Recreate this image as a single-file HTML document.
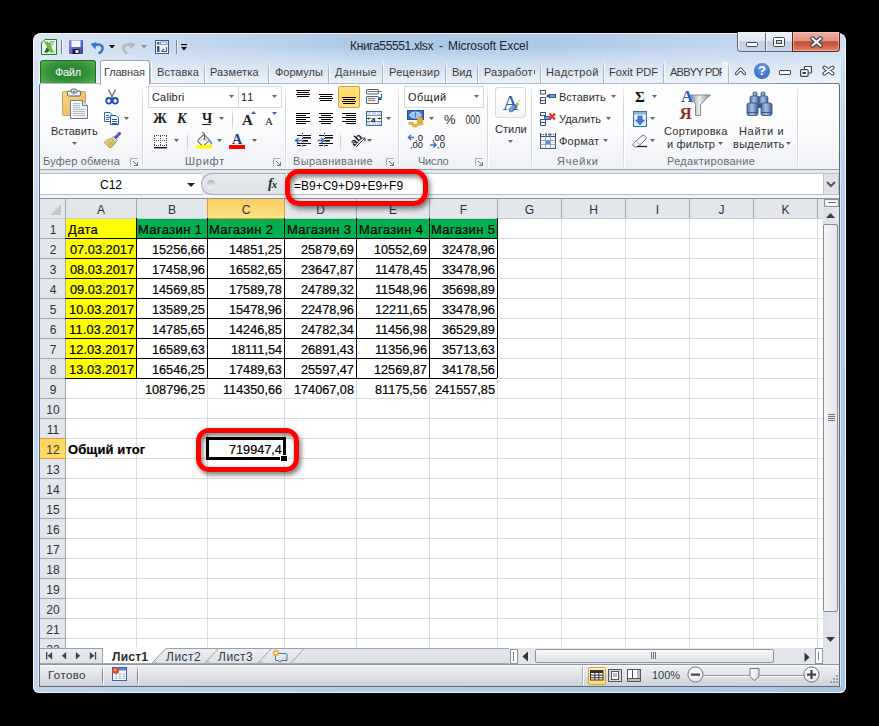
<!DOCTYPE html>
<html><head><meta charset="utf-8">
<style>
*{margin:0;padding:0;box-sizing:border-box}
html,body{width:879px;height:726px;overflow:hidden;background:#000}
body{position:relative;font-family:"Liberation Sans", sans-serif;}
.a{position:absolute}
.t{position:absolute;white-space:nowrap;line-height:1}
</style></head><body>

<div class="a" style="left:33px;top:33px;width:813px;height:660px;border-radius:8px 8px 6px 6px;background:linear-gradient(90deg,#dae6f3 0px,#c6d9ee 140px,#afc9e5 320px,#aec8e5 520px,#c2d6ed 700px,#cddef1 813px);box-shadow:inset 0 0 0 1px rgba(255,255,255,0.75)"></div>
<div class="a" style="left:34px;top:46px;width:811px;height:38px;background:linear-gradient(180deg,rgba(230,238,248,0) 0px,rgba(226,236,247,0.6) 16px,rgba(238,244,251,0.95) 37px)"></div>
<div class="a" style="left:34px;top:58px;width:5px;height:629px;background:linear-gradient(180deg,#d3e2f2,#c3d7ec 25%,#bcd3ea 100%)"></div>
<div class="a" style="left:38px;top:58px;width:1px;height:629px;background:#e2eefa"></div>
<div class="a" style="left:840px;top:58px;width:5px;height:629px;background:linear-gradient(180deg,#cddff1,#b4cce6 25%,#a9c4e1 100%)"></div>
<div class="a" style="left:840px;top:58px;width:1px;height:629px;background:#dceaf7"></div>
<div class="a" style="left:34px;top:686px;width:811px;height:6px;border-radius:0 0 5px 5px;background:linear-gradient(90deg,#bcd3ea,#b3cde8 50%,#a9c4e1)"></div>
<div class="t" style="left:350px;top:40px;font-size:12px;letter-spacing:-0.357px;color:#1b2531">Книга55551.xlsx</div>
<div class="t" style="left:439px;top:40px;font-size:12px;color:#1b2531">-</div>
<div class="t" style="left:448px;top:40px;font-size:12px;letter-spacing:-0.071px;color:#1b2531">Microsoft Excel</div>
<div class="a" style="left:737px;top:32px;width:56px;height:20px;border:1px solid #5f6a78;border-top:0;border-radius:0 0 0 4px;background:linear-gradient(180deg,#eef3f9 0%,#dfe8f2 45%,#c2d2e3 52%,#c9d8e8 100%);box-shadow:inset 1px 0 0 rgba(255,255,255,.7)"></div>
<div class="a" style="left:765px;top:33px;width:1px;height:18px;background:#5f6a78;box-shadow:1px 0 0 rgba(255,255,255,.7)"></div>
<div class="a" style="left:792px;top:32px;width:48px;height:20px;border:1px solid #5a2a22;border-top:0;border-radius:0 0 4px 0;background:linear-gradient(180deg,#eeb0a3 0%,#e39584 45%,#c9482c 52%,#d26a50 80%,#dc8a74 100%);box-shadow:inset 0 0 0 1px rgba(255,210,200,.5)"></div>
<div class="a" style="left:746px;top:42px;width:12px;height:5px;background:#fff;border:1px solid #3c4552;border-radius:1.5px"></div>
<div class="a" style="left:773px;top:37px;width:12px;height:10px;border:1px solid #3c4552;border-radius:1.5px;background:#fff"></div>
<div class="a" style="left:776px;top:40px;width:6px;height:4px;border:1px solid #3c4552;background:#c5d3e2"></div>
<svg class="a" style="left:810px;top:36px" width="13" height="12"><path d="M2.5,2.5 L10.5,9.5 M10.5,2.5 L2.5,9.5" stroke="#3a4454" stroke-width="4.4" stroke-linecap="round"/><path d="M2.5,2.5 L10.5,9.5 M10.5,2.5 L2.5,9.5" stroke="#fff" stroke-width="2.2" stroke-linecap="round"/></svg>
<svg class="a" style="left:41px;top:39px" width="17" height="17">
<defs><linearGradient id="xg" x1="0" y1="0" x2="1" y2="1"><stop offset="0" stop-color="#ffffff"/><stop offset="1" stop-color="#ddf0d6"/></linearGradient></defs>
<path d="M4,0.5 H15.5 V15.5 H0.5 V4 Z" fill="url(#xg)" stroke="#1f7a33"/>
<polygon points="9.3,2.5 13.3,2.5 7,13.5 3,13.5" fill="#1e6c30"/>
<polygon points="9.3,2.5 13.3,2.5 10.5,7.3 8.6,6.2" fill="#a8d88f"/>
<polygon points="2.8,2.5 6.8,2.5 13.3,13.5 9.3,13.5" fill="#69bd3f"/>
</svg>
<div class="a" style="left:61px;top:40px;width:1px;height:14px;background:#7c8896;box-shadow:1px 0 0 rgba(255,255,255,.6)"></div>
<svg class="a" style="left:69px;top:40px" width="15" height="15">
<defs><linearGradient id="svg1" x1="0" y1="0" x2="1" y2="1"><stop offset="0" stop-color="#8a8ff0"/><stop offset="1" stop-color="#3b3fa8"/></linearGradient></defs>
<rect x="0" y="0" width="14" height="14" rx="1" fill="url(#svg1)"/><rect x="2.5" y="0.5" width="9" height="6.5" fill="#f7f8fc"/>
<rect x="3.5" y="9" width="7" height="5" fill="#1c1c2c"/><rect x="6.5" y="10" width="3" height="3" fill="#dfe3ea"/></svg>
<svg class="a" style="left:90px;top:41px" width="15" height="13">
<path d="M3,5.5 C8,2 13,3.5 12.5,8 C12,10.5 10,12 8.5,12.5" fill="none" stroke="#3a78d0" stroke-width="2.6"/>
<polygon points="0.5,3 6.5,1 5.5,8.5" fill="#3a78d0"/></svg>
<svg class="a" style="left:109px;top:45px" width="7" height="4"><polygon points="0,0 6,0 3,3.5" fill="#000"/></svg>
<svg class="a" style="left:122px;top:41px" width="14" height="13">
<path d="M11,5.5 C6,2 1,3.5 1.5,8 C2,10.5 4,12 5.5,12.5" fill="none" stroke="#b5b9be" stroke-width="2.6"/>
<polygon points="13.5,3 7.5,1 8.5,8.5" fill="#b5b9be"/></svg>
<svg class="a" style="left:141px;top:45px" width="7" height="4"><polygon points="0,0 6,0 3,3.5" fill="#8a9099"/></svg>
<svg class="a" style="left:155px;top:40px" width="15" height="15">
<rect x="0.5" y="0.5" width="13" height="13" fill="#f4f7fb" stroke="#3e5b8a"/><rect x="2" y="2" width="2.5" height="2.5" fill="#3e5b8a"/>
<rect x="5.5" y="2" width="6.5" height="2.5" fill="none" stroke="#6f87ad" stroke-width="0.8"/><rect x="2" y="6" width="2.5" height="6" fill="#3e5b8a"/>
<path d="M6.5,11.5 L11.5,11.5 L11.5,7 M9,9 L6.5,11.5" fill="none" stroke="#3e5b8a" stroke-width="1.1"/></svg>
<div class="a" style="left:176px;top:40px;width:1px;height:14px;background:#7c8896;box-shadow:1px 0 0 rgba(255,255,255,.6)"></div>
<svg class="a" style="left:181px;top:44px" width="8" height="8"><rect x="0" y="0" width="6" height="1.2" fill="#000"/><polygon points="0,3 6,3 3,6.5" fill="#000"/></svg>
<div class="a" style="left:39px;top:83px;width:801px;height:87px;background:linear-gradient(180deg,#ffffff 0%,#fdfdfe 45%,#eef1f5 100%);border-left:1px solid #5f6b78;border-right:1px solid #5f6b78;border-bottom:1px solid #9aa3ad;border-top:1px solid #b3bac3;border-radius:3px 3px 0 0"></div>
<div class="a" style="left:700px;top:83px;width:139px;height:1px;background:linear-gradient(90deg,#b3bac3,#6d7783)"></div>
<div class="a" style="left:40px;top:60px;width:56px;height:23px;border-radius:3px 3px 0 0;border:1px solid #1f6a27;border-bottom:0;background:radial-gradient(ellipse 65% 75% at 50% 50%,#2a8130 0%,#2f8a35 45%,#56b34f 100%)"></div>
<div class="t" style="left:55px;top:67px;font-size:11px;letter-spacing:-0.333px;color:#fff">Файл</div>
<div class="a" style="left:100px;top:60px;width:50px;height:25px;background:linear-gradient(180deg,#fcfdfe,#fff);border:1px solid #9ba5b1;border-bottom:0;border-radius:3px 3px 0 0"></div>
<div class="t" style="left:104px;top:67px;font-size:11px;letter-spacing:-0.167px;color:#3c3c3c">Главная</div>
<div class="a" style="left:150px;top:62px;width:1px;height:21px;background:linear-gradient(180deg,rgba(170,182,196,0),#aab6c4 30%,#aab6c4);box-shadow:1px 0 0 rgba(255,255,255,.7)"></div>
<div class="t" style="left:157px;top:67px;font-size:11px;letter-spacing:0.167px;color:#3c3c3c">Вставка</div>
<div class="a" style="left:204px;top:62px;width:1px;height:21px;background:linear-gradient(180deg,rgba(170,182,196,0),#aab6c4 30%,#aab6c4);box-shadow:1px 0 0 rgba(255,255,255,.7)"></div>
<div class="t" style="left:210px;top:67px;font-size:11px;letter-spacing:0.143px;color:#3c3c3c">Разметка</div>
<div class="a" style="left:268px;top:62px;width:1px;height:21px;background:linear-gradient(180deg,rgba(170,182,196,0),#aab6c4 30%,#aab6c4);box-shadow:1px 0 0 rgba(255,255,255,.7)"></div>
<div class="t" style="left:275px;top:67px;font-size:11px;letter-spacing:0.000px;color:#3c3c3c">Формулы</div>
<div class="a" style="left:328px;top:62px;width:1px;height:21px;background:linear-gradient(180deg,rgba(170,182,196,0),#aab6c4 30%,#aab6c4);box-shadow:1px 0 0 rgba(255,255,255,.7)"></div>
<div class="t" style="left:335px;top:67px;font-size:11px;letter-spacing:0.400px;color:#3c3c3c">Данные</div>
<div class="a" style="left:382px;top:62px;width:1px;height:21px;background:linear-gradient(180deg,rgba(170,182,196,0),#aab6c4 30%,#aab6c4);box-shadow:1px 0 0 rgba(255,255,255,.7)"></div>
<div class="t" style="left:389px;top:67px;font-size:11px;letter-spacing:0.286px;color:#3c3c3c">Рецензир</div>
<div class="a" style="left:445px;top:62px;width:1px;height:21px;background:linear-gradient(180deg,rgba(170,182,196,0),#aab6c4 30%,#aab6c4);box-shadow:1px 0 0 rgba(255,255,255,.7)"></div>
<div class="t" style="left:452px;top:67px;font-size:11px;letter-spacing:0.000px;color:#3c3c3c">Вид</div>
<div class="a" style="left:477px;top:62px;width:1px;height:21px;background:linear-gradient(180deg,rgba(170,182,196,0),#aab6c4 30%,#aab6c4);box-shadow:1px 0 0 rgba(255,255,255,.7)"></div>
<div class="t" style="left:484px;top:67px;font-size:11px;letter-spacing:0.143px;color:#3c3c3c">Разработ</div>
<div class="a" style="left:540px;top:62px;width:1px;height:21px;background:linear-gradient(180deg,rgba(170,182,196,0),#aab6c4 30%,#aab6c4);box-shadow:1px 0 0 rgba(255,255,255,.7)"></div>
<div class="t" style="left:546px;top:67px;font-size:11px;letter-spacing:0.429px;color:#3c3c3c">Надстрой</div>
<div class="a" style="left:603px;top:62px;width:1px;height:21px;background:linear-gradient(180deg,rgba(170,182,196,0),#aab6c4 30%,#aab6c4);box-shadow:1px 0 0 rgba(255,255,255,.7)"></div>
<div class="t" style="left:609px;top:67px;font-size:11px;letter-spacing:0.000px;color:#3c3c3c">Foxit PDF</div>
<div class="a" style="left:663px;top:62px;width:1px;height:21px;background:linear-gradient(180deg,rgba(170,182,196,0),#aab6c4 30%,#aab6c4);box-shadow:1px 0 0 rgba(255,255,255,.7)"></div>
<div class="t" style="left:670px;top:67px;font-size:11px;letter-spacing:-0.750px;color:#3c3c3c">ABBYY PDF</div>
<div class="a" style="left:534px;top:70px;width:1px;height:4px;background:#3c3c3c;opacity:.8"></div>
<div class="a" style="left:722px;top:62px;width:6px;height:21px;background:linear-gradient(90deg,#eef3f9,#eef3f9)"></div>
<div class="a" style="left:728px;top:62px;width:1px;height:21px;background:linear-gradient(180deg,rgba(170,182,196,0),#aab6c4 30%,#aab6c4);box-shadow:1px 0 0 rgba(255,255,255,.7)"></div>
<svg class="a" style="left:735px;top:67px" width="11" height="9"><path d="M1.5,6.5 L5.5,2 L9.5,6.5" fill="none" stroke="#3c4552" stroke-width="3.2" stroke-linejoin="round" stroke-linecap="round"/><path d="M1.5,6.5 L5.5,2 L9.5,6.5" fill="none" stroke="#fff" stroke-width="1.2" stroke-linejoin="round" stroke-linecap="round"/></svg>
<div class="a" style="left:754px;top:63px;width:16px;height:16px;border-radius:50%;background:radial-gradient(circle at 50% 30%,#6d9fe3,#3f77cc 60%,#2f64ba)"></div>
<div class="t" style="left:758px;top:64px;font-size:13px;font-weight:bold;color:#fff">?</div>
<div class="a" style="left:779px;top:70px;width:12px;height:5px;border:1px solid #3c4552;border-radius:1px;background:#fff"></div>
<svg class="a" style="left:800px;top:66px" width="13" height="11"><rect x="4.5" y="0.5" width="7" height="6.5" rx="1" fill="#fff" stroke="#3c4552" stroke-width="1.2"/><rect x="0.6" y="3.6" width="7.5" height="6.8" rx="1" fill="#fff" stroke="#3c4552" stroke-width="1.2"/><rect x="2.5" y="6" width="3.5" height="2" fill="#3c4552"/></svg>
<svg class="a" style="left:822px;top:65px" width="13" height="11"><path d="M2.5,2.5 L10.5,8.5 M10.5,2.5 L2.5,8.5" stroke="#3c4552" stroke-width="4" stroke-linecap="round"/><path d="M2.5,2.5 L10.5,8.5 M10.5,2.5 L2.5,8.5" stroke="#fff" stroke-width="2" stroke-linecap="round"/></svg>
<div class="a" style="left:142px;top:85px;width:1px;height:83px;background:linear-gradient(180deg,rgba(210,215,222,.2),#d2d7de 20%,#d2d7de 85%,rgba(210,215,222,.4));box-shadow:1px 0 0 #fff"></div>
<div class="a" style="left:285px;top:85px;width:1px;height:83px;background:linear-gradient(180deg,rgba(210,215,222,.2),#d2d7de 20%,#d2d7de 85%,rgba(210,215,222,.4));box-shadow:1px 0 0 #fff"></div>
<div class="a" style="left:398px;top:85px;width:1px;height:83px;background:linear-gradient(180deg,rgba(210,215,222,.2),#d2d7de 20%,#d2d7de 85%,rgba(210,215,222,.4));box-shadow:1px 0 0 #fff"></div>
<div class="a" style="left:487px;top:85px;width:1px;height:83px;background:linear-gradient(180deg,rgba(210,215,222,.2),#d2d7de 20%,#d2d7de 85%,rgba(210,215,222,.4));box-shadow:1px 0 0 #fff"></div>
<div class="a" style="left:531px;top:85px;width:1px;height:83px;background:linear-gradient(180deg,rgba(210,215,222,.2),#d2d7de 20%,#d2d7de 85%,rgba(210,215,222,.4));box-shadow:1px 0 0 #fff"></div>
<div class="a" style="left:623px;top:85px;width:1px;height:83px;background:linear-gradient(180deg,rgba(210,215,222,.2),#d2d7de 20%,#d2d7de 85%,rgba(210,215,222,.4));box-shadow:1px 0 0 #fff"></div>
<div class="a" style="left:797px;top:85px;width:1px;height:83px;background:linear-gradient(180deg,rgba(210,215,222,.2),#d2d7de 20%,#d2d7de 85%,rgba(210,215,222,.4));box-shadow:1px 0 0 #fff"></div>
<div class="t" style="left:43px;top:156px;font-size:11px;letter-spacing:0.182px;color:#646b76">Буфер обмена</div>
<svg class="a" style="left:130px;top:158px" width="9" height="9"><path d="M0.5,7.5 V0.5 H7.5" fill="none" stroke="#a7adb5"/><path d="M3,3 L7,7 M7.5,4 V7.5 H4" fill="none" stroke="#707882"/></svg>
<div class="t" style="left:185px;top:156px;font-size:11px;letter-spacing:0.750px;color:#646b76">Шрифт</div>
<svg class="a" style="left:273px;top:158px" width="9" height="9"><path d="M0.5,7.5 V0.5 H7.5" fill="none" stroke="#a7adb5"/><path d="M3,3 L7,7 M7.5,4 V7.5 H4" fill="none" stroke="#707882"/></svg>
<div class="t" style="left:293px;top:156px;font-size:11px;letter-spacing:0.364px;color:#646b76">Выравнивание</div>
<svg class="a" style="left:386px;top:158px" width="9" height="9"><path d="M0.5,7.5 V0.5 H7.5" fill="none" stroke="#a7adb5"/><path d="M3,3 L7,7 M7.5,4 V7.5 H4" fill="none" stroke="#707882"/></svg>
<div class="t" style="left:418px;top:156px;font-size:11px;letter-spacing:-0.250px;color:#646b76">Число</div>
<svg class="a" style="left:475px;top:158px" width="9" height="9"><path d="M0.5,7.5 V0.5 H7.5" fill="none" stroke="#a7adb5"/><path d="M3,3 L7,7 M7.5,4 V7.5 H4" fill="none" stroke="#707882"/></svg>
<div class="t" style="left:557px;top:156px;font-size:11px;letter-spacing:0.800px;color:#646b76">Ячейки</div>
<div class="t" style="left:667px;top:156px;font-size:11px;letter-spacing:0.308px;color:#646b76">Редактирование</div>
<svg class="a" style="left:58px;top:86px" width="34" height="36"><defs><linearGradient id="cb" x1="0" y1="0" x2="1" y2="1"><stop offset="0" stop-color="#f8d386"/><stop offset="1" stop-color="#ecb652"/></linearGradient>
<linearGradient id="pp" x1="0" y1="0" x2="1" y2="1"><stop offset="0" stop-color="#ffffff"/><stop offset="1" stop-color="#e6ebf2"/></linearGradient></defs>
<rect x="4.5" y="5.5" width="23" height="24" rx="1.5" fill="url(#cb)" stroke="#c9a462"/>
<rect x="9.5" y="5" width="13" height="5" rx="1.2" fill="#e9edf2" stroke="#5d6670"/>
<rect x="13" y="3" width="6" height="4" rx="2" fill="#e9edf2" stroke="#5d6670"/><circle cx="16" cy="5.5" r="1" fill="#8a6a3a"/>
<path d="M12.5,14.5 H24.5 L29.5,19.5 V32.5 H12.5 Z" fill="url(#pp)" stroke="#6d7d93"/>
<path d="M24.5,14.5 V19.5 H29.5" fill="#dde4ee" stroke="#6d7d93"/>
<path d="M15,17.5 H22 M15,19.5 H22 M15,21.5 H22 M15,23.5 H27 M15,25.5 H27 M15,27.5 H27 M15,29.5 H27" stroke="#aab4c1" stroke-width="0.9"/></svg>
<div class="t" style="left:51px;top:126px;font-size:11px;letter-spacing:0.000px;color:#2e2e2e">Вставить</div>
<svg class="a" style="left:72px;top:142px" width="6" height="4"><polygon points="0,0 5,0 2.5,3" fill="#646464"/></svg>
<svg class="a" style="left:105px;top:89px" width="14" height="16"><path d="M3.5,0.5 L8,9.5 M10.5,0.5 L6,9.5" stroke="#737a85" stroke-width="1.5"/>
<ellipse cx="3.8" cy="11.8" rx="2.6" ry="2.8" fill="none" stroke="#1f4fb8" stroke-width="1.9"/><ellipse cx="10.2" cy="11.8" rx="2.6" ry="2.8" fill="none" stroke="#1f4fb8" stroke-width="1.9"/></svg>
<svg class="a" style="left:103px;top:111px" width="18" height="15"><path d="M1.5,1.5 H7 L9.5,4 V10.5 H1.5 Z" fill="#fbfcfe" stroke="#3a68b4"/>
<path d="M3,4.5 H6 M3,6.5 H7.5 M3,8.5 H6" stroke="#3a68b4"/>
<path d="M7.5,4.5 H13 L15.5,7 V13.5 H7.5 Z" fill="#ffffff" stroke="#2755a6"/>
<path d="M9,8.5 H14 M9,10.5 H14 M9,12.5 H14" stroke="#2755a6"/></svg>
<svg class="a" style="left:124px;top:117px" width="6" height="4"><polygon points="0,0 5,0 2.5,3" fill="#646464"/></svg>
<svg class="a" style="left:103px;top:132px" width="18" height="17"><defs><linearGradient id="br" x1="0" y1="0" x2="1" y2="1"><stop offset="0" stop-color="#fbe9a0"/><stop offset="1" stop-color="#c9a535"/></linearGradient></defs>
<path d="M16.5,1.5 L12.5,5.5" stroke="#4b3fb0" stroke-width="3" stroke-linecap="round"/><path d="M16,1.5 L13,4.5" stroke="#9d95e8" stroke-width="0.8"/>
<path d="M10.5,4.5 L14.5,8.5 L12.5,10.5 L8.5,6.5 Z" fill="#d3d7de" stroke="#6f7680" stroke-width="0.7"/>
<path d="M8.5,6.5 L12.5,10.5 C11,13 9,15 7,16 L1,10.5 C2.5,8.5 5,7 8.5,6.5 Z" fill="url(#br)" stroke="#9a8230" stroke-width="0.7"/>
<path d="M3,11 L8,8.5 M5,13 L10,10" stroke="#b8972e" stroke-width="0.6"/></svg>
<div class="a" style="left:148px;top:86px;width:91px;height:22px;background:#fff;border:1px solid #d3d8de"></div>
<div class="a" style="left:238px;top:86px;width:44px;height:22px;background:#fff;border:1px solid #d3d8de"></div>
<div class="t" style="left:152px;top:92px;font-size:11px;letter-spacing:0.167px;color:#1a1a1a">Calibri</div>
<svg class="a" style="left:229px;top:95px" width="6" height="4"><polygon points="0,0 5,0 2.5,3" fill="#646464"/></svg>
<svg class="a" style="left:272px;top:95px" width="6" height="4"><polygon points="0,0 5,0 2.5,3" fill="#646464"/></svg>
<div class="t" style="left:241px;top:92px;font-size:11px;letter-spacing:1.000px;color:#1a1a1a">11</div>
<div class="t" style="left:153px;top:112px;font-family:\'Liberation Serif\',serif;font-weight:bold;font-size:14px;color:#1e1e1e">Ж</div>
<div class="t" style="left:177px;top:112px;font-family:\'Liberation Serif\',serif;font-weight:bold;font-size:14px;font-style:italic;color:#1e1e1e">К</div>
<div class="t" style="left:202px;top:112px;font-family:\'Liberation Serif\',serif;font-weight:bold;font-size:14px;color:#1e1e1e">Ч</div>
<div class="a" style="left:202px;top:124px;width:9px;height:1px;background:#1e1e1e"></div>
<svg class="a" style="left:219px;top:117px" width="6" height="4"><polygon points="0,0 5,0 2.5,3" fill="#646464"/></svg>
<div class="a" style="left:232px;top:109px;width:1px;height:22px;background:linear-gradient(180deg,rgba(205,210,217,0),#cdd2d9 30%,#cdd2d9 70%,rgba(205,210,217,0))"></div>
<div class="t" style="left:242px;top:113px;font-family:\'Liberation Serif\',serif;font-weight:bold;font-size:15px;color:#222">A</div>
<svg class="a" style="left:251px;top:111px" width="6" height="4"><polygon points="0,3 5,3 2.5,0" fill="#2f62c0"/></svg>
<div class="t" style="left:265px;top:116px;font-family:\'Liberation Serif\',serif;font-size:11px;color:#222">A</div>
<svg class="a" style="left:272px;top:112px" width="6" height="4"><polygon points="0,0 5,0 2.5,3" fill="#2f62c0"/></svg>
<svg class="a" style="left:154px;top:135px" width="14" height="14"><rect x="0" y="0" width="1" height="1" fill="#4a4a4a"/><rect x="2" y="0" width="1" height="1" fill="#4a4a4a"/><rect x="4" y="0" width="1" height="1" fill="#4a4a4a"/><rect x="6" y="0" width="1" height="1" fill="#4a4a4a"/><rect x="8" y="0" width="1" height="1" fill="#4a4a4a"/><rect x="10" y="0" width="1" height="1" fill="#4a4a4a"/><rect x="12" y="0" width="1" height="1" fill="#4a4a4a"/><rect x="0" y="5" width="1" height="1" fill="#4a4a4a"/><rect x="2" y="5" width="1" height="1" fill="#4a4a4a"/><rect x="4" y="5" width="1" height="1" fill="#4a4a4a"/><rect x="6" y="5" width="1" height="1" fill="#4a4a4a"/><rect x="8" y="5" width="1" height="1" fill="#4a4a4a"/><rect x="10" y="5" width="1" height="1" fill="#4a4a4a"/><rect x="12" y="5" width="1" height="1" fill="#4a4a4a"/><rect x="0" y="10" width="1" height="1" fill="#4a4a4a"/><rect x="2" y="10" width="1" height="1" fill="#4a4a4a"/><rect x="4" y="10" width="1" height="1" fill="#4a4a4a"/><rect x="6" y="10" width="1" height="1" fill="#4a4a4a"/><rect x="8" y="10" width="1" height="1" fill="#4a4a4a"/><rect x="10" y="10" width="1" height="1" fill="#4a4a4a"/><rect x="12" y="10" width="1" height="1" fill="#4a4a4a"/><rect x="0" y="1" width="1" height="1" fill="#4a4a4a"/><rect x="0" y="3" width="1" height="1" fill="#4a4a4a"/><rect x="0" y="5" width="1" height="1" fill="#4a4a4a"/><rect x="0" y="7" width="1" height="1" fill="#4a4a4a"/><rect x="0" y="9" width="1" height="1" fill="#4a4a4a"/><rect x="6" y="1" width="1" height="1" fill="#4a4a4a"/><rect x="6" y="3" width="1" height="1" fill="#4a4a4a"/><rect x="6" y="5" width="1" height="1" fill="#4a4a4a"/><rect x="6" y="7" width="1" height="1" fill="#4a4a4a"/><rect x="6" y="9" width="1" height="1" fill="#4a4a4a"/><rect x="12" y="1" width="1" height="1" fill="#4a4a4a"/><rect x="12" y="3" width="1" height="1" fill="#4a4a4a"/><rect x="12" y="5" width="1" height="1" fill="#4a4a4a"/><rect x="12" y="7" width="1" height="1" fill="#4a4a4a"/><rect x="12" y="9" width="1" height="1" fill="#4a4a4a"/><rect x="0" y="12" width="13" height="1.4" fill="#111"/></svg>
<svg class="a" style="left:174px;top:139px" width="6" height="4"><polygon points="0,0 5,0 2.5,3" fill="#646464"/></svg>
<div class="a" style="left:187px;top:131px;width:1px;height:21px;background:linear-gradient(180deg,rgba(205,210,217,0),#cdd2d9 30%,#cdd2d9 70%,rgba(205,210,217,0))"></div>
<svg class="a" style="left:196px;top:132px" width="17" height="17"><path d="M2.5,7.5 L8,2.5 L13.5,8 L8.5,13 C7.5,13.8 6.5,13.8 5.5,13 L2.5,10 C1.8,9.3 1.8,8.3 2.5,7.5 Z" fill="#fdfdfd" stroke="#2a2a2a" stroke-width="1"/>
<path d="M3.5,8 L12.5,8" stroke="#b9c7d9" stroke-width="1"/>
<path d="M6,1 C7,0 8.5,0.5 8.5,2 L8.5,6" stroke="#444" stroke-width="0.9" fill="none"/><circle cx="8.5" cy="6.8" r="1" fill="#444"/>
<path d="M13.5,8 C15.5,8.5 16.5,10.5 15.8,12.5 L14.8,12.5 C15,11 14.5,10 13,9.5 Z" fill="#3f7fd6"/>
<rect x="0" y="13" width="16" height="3.6" fill="#ffff00"/></svg>
<svg class="a" style="left:217px;top:139px" width="6" height="4"><polygon points="0,0 5,0 2.5,3" fill="#646464"/></svg>
<div class="t" style="left:232px;top:133px;font-family:\'Liberation Serif\',serif;font-weight:bold;font-size:14px;color:#1f3b7c">A</div>
<div class="a" style="left:229px;top:145px;width:16px;height:4px;background:#ff0000"></div>
<svg class="a" style="left:252px;top:139px" width="6" height="4"><polygon points="0,0 5,0 2.5,3" fill="#646464"/></svg>
<svg class="a" style="left:296px;top:90px" width="16" height="16"><rect x="0" y="0" width="14" height="1" fill="#000"/><rect x="1" y="2" width="12" height="1" fill="#000"/><rect x="0" y="4" width="14" height="1" fill="#000"/><rect x="1" y="6" width="12" height="1" fill="#000"/></svg>
<svg class="a" style="left:319px;top:94px" width="16" height="16"><rect x="0" y="0" width="14" height="1" fill="#000"/><rect x="1" y="2" width="12" height="1" fill="#000"/><rect x="0" y="4" width="14" height="1" fill="#000"/><rect x="1" y="6" width="12" height="1" fill="#000"/></svg>
<div class="a" style="left:338px;top:86px;width:22px;height:22px;border:1px solid #d3a03c;border-radius:2px;background:linear-gradient(180deg,#ffe37e,#ffd862 55%,#ffe98c)"></div>
<svg class="a" style="left:342px;top:97px" width="16" height="16"><rect x="0" y="0" width="14" height="1" fill="#000"/><rect x="1" y="2" width="12" height="1" fill="#000"/><rect x="0" y="4" width="14" height="1" fill="#000"/><rect x="1" y="6" width="12" height="1" fill="#000"/></svg>
<svg class="a" style="left:365px;top:88px" width="19" height="17"><rect x="1.5" y="1.5" width="12" height="4.5" rx="0.5" fill="#e9f0fa" stroke="#44679e"/><path d="M3,3.5 H17" stroke="#b8742c" stroke-width="1"/>
<rect x="1.5" y="8.5" width="12" height="7" rx="0.5" fill="#e9f0fa" stroke="#44679e"/><path d="M3,10.5 H10 M3,12.5 H10" stroke="#b8742c" stroke-width="1"/>
<path d="M16.5,6 V9.5 L14.5,11.5 M14.5,9 V11.5 H17" fill="none" stroke="#2d5aa8" stroke-width="1.1"/></svg>
<svg class="a" style="left:296px;top:113px" width="16" height="16"><rect x="0" y="0" width="14" height="1" fill="#000"/><rect x="0" y="2" width="10" height="1" fill="#000"/><rect x="0" y="4" width="14" height="1" fill="#000"/><rect x="0" y="6" width="10" height="1" fill="#000"/><rect x="0" y="8" width="14" height="1" fill="#000"/><rect x="0" y="10" width="10" height="1" fill="#000"/></svg>
<svg class="a" style="left:319px;top:113px" width="16" height="16"><rect x="0" y="0" width="14" height="1" fill="#000"/><rect x="2" y="2" width="10" height="1" fill="#000"/><rect x="0" y="4" width="14" height="1" fill="#000"/><rect x="2" y="6" width="10" height="1" fill="#000"/><rect x="0" y="8" width="14" height="1" fill="#000"/><rect x="2" y="10" width="10" height="1" fill="#000"/></svg>
<svg class="a" style="left:342px;top:113px" width="16" height="16"><rect x="0" y="0" width="14" height="1" fill="#000"/><rect x="4" y="2" width="10" height="1" fill="#000"/><rect x="0" y="4" width="14" height="1" fill="#000"/><rect x="4" y="6" width="10" height="1" fill="#000"/><rect x="0" y="8" width="14" height="1" fill="#000"/><rect x="4" y="10" width="10" height="1" fill="#000"/></svg>
<svg class="a" style="left:366px;top:111px" width="17" height="16"><rect x="0.5" y="0.5" width="15" height="14" fill="#c9daf1" stroke="#44679e"/>
<rect x="1" y="4.5" width="14" height="6" fill="#fff"/><path d="M1,4.5 H15 M1,10.5 H15" stroke="#7b98c4"/>
<path d="M5.5,1 V4 M10.5,1 V4 M5.5,11 V14 M10.5,11 V14" stroke="#fff"/>
<text x="5" y="10.5" font-family="Liberation Serif" font-weight="bold" font-size="9" fill="#222">a</text>
<path d="M1.5,7.5 H4.5 M11.5,7.5 H14.5 M2.5,6.5 L1.5,7.5 L2.5,8.5 M13.5,6.5 L14.5,7.5 L13.5,8.5" stroke="#222" stroke-width="0.9" fill="none"/></svg>
<svg class="a" style="left:386px;top:117px" width="6" height="4"><polygon points="0,0 5,0 2.5,3" fill="#646464"/></svg>
<svg class="a" style="left:294px;top:132px" width="18" height="16"><path d="M8.5,1 V15" stroke="#111" stroke-dasharray="1,1.5"/>
<rect x="3" y="3" width="5" height="1" fill="#111"/><rect x="9" y="3" width="8" height="1" fill="#111"/>
<rect x="9" y="5" width="8" height="1.6" fill="#111"/><rect x="9" y="8" width="5" height="1.6" fill="#111"/>
<rect x="3" y="11" width="5" height="1" fill="#111"/><rect x="9" y="11" width="8" height="1" fill="#111"/>
<rect x="3" y="13" width="4" height="1" fill="#111"/><rect x="9" y="13" width="3" height="1" fill="#111"/>
<path d="M8,8.5 H2 M4.5,6 L1.5,8.5 L4.5,11" stroke="#3d72cc" stroke-width="1.5" fill="none"/></svg>
<svg class="a" style="left:316px;top:132px" width="18" height="16"><path d="M8.5,1 V15" stroke="#111" stroke-dasharray="1,1.5"/>
<rect x="3" y="3" width="5" height="1" fill="#111"/><rect x="9" y="3" width="8" height="1" fill="#111"/>
<rect x="9" y="5" width="8" height="1.6" fill="#111"/><rect x="9" y="8" width="5" height="1.6" fill="#111"/>
<rect x="3" y="11" width="5" height="1" fill="#111"/><rect x="9" y="11" width="8" height="1" fill="#111"/>
<rect x="3" y="13" width="4" height="1" fill="#111"/><rect x="9" y="13" width="3" height="1" fill="#111"/>
<path d="M1.5,8.5 H8 M5,6 L8,8.5 L5,11" stroke="#3d72cc" stroke-width="1.5" fill="none"/></svg>
<div class="a" style="left:340px;top:131px;width:1px;height:21px;background:linear-gradient(180deg,rgba(205,210,217,0),#cdd2d9 30%,#cdd2d9 70%,rgba(205,210,217,0))"></div>
<svg class="a" style="left:349px;top:132px" width="18" height="17"><text x="0.5" y="11" transform="rotate(-45 7 7)" font-family="Liberation Sans" font-weight="bold" font-size="10.5" fill="#1a1a1a">ab</text>
<path d="M7,15 L15.5,6.5" stroke="#333" stroke-width="1"/><path d="M12.5,6 H16 V9.5" stroke="#333" stroke-width="1" fill="none"/></svg>
<svg class="a" style="left:367px;top:139px" width="6" height="4"><polygon points="0,0 5,0 2.5,3" fill="#646464"/></svg>
<div class="a" style="left:404px;top:86px;width:80px;height:22px;background:#fff;border:1px solid #d3d8de"></div>
<div class="t" style="left:408px;top:92px;font-size:11px;letter-spacing:0.500px;color:#1a1a1a">Общий</div>
<svg class="a" style="left:474px;top:95px" width="6" height="4"><polygon points="0,0 5,0 2.5,3" fill="#646464"/></svg>
<svg class="a" style="left:407px;top:110px" width="18" height="18"><rect x="0.5" y="0.5" width="16" height="9" fill="#3f6fc4" stroke="#2a4f96"/>
<ellipse cx="8.5" cy="5" rx="5.5" ry="3" fill="#9fc0ef" stroke="#dce9fb" stroke-width="0.8"/><path d="M8.5,2.5 V7.5" stroke="#3f6fc4"/>
<ellipse cx="13" cy="9" rx="3" ry="1.4" fill="#f2c23c" stroke="#b68514" stroke-width="0.6"/>
<ellipse cx="13" cy="11.3" rx="3" ry="1.4" fill="#f2c23c" stroke="#b68514" stroke-width="0.6"/>
<ellipse cx="13" cy="13.6" rx="3" ry="1.4" fill="#f2c23c" stroke="#b68514" stroke-width="0.6"/>
<ellipse cx="8" cy="15.6" rx="3" ry="1.4" fill="#f2c23c" stroke="#b68514" stroke-width="0.6"/>
<ellipse cx="4" cy="13.2" rx="2.5" ry="1.2" fill="#f2c23c" stroke="#b68514" stroke-width="0.6"/></svg>
<svg class="a" style="left:429px;top:117px" width="6" height="4"><polygon points="0,0 5,0 2.5,3" fill="#646464"/></svg>
<div class="t" style="left:444px;top:113px;font-size:13px;color:#1e1e1e">%</div>
<svg class="a" style="left:465px;top:113px" width="16" height="12"><text x="0.5" y="10.5" font-family="Liberation Sans" font-size="12" textLength="14.5" lengthAdjust="spacingAndGlyphs" fill="#1e1e1e">000</text></svg>
<svg class="a" style="left:407px;top:133px" width="18" height="16"><path d="M7,4.5 H1.5 M4,2 L1.5,4.5 L4,7" stroke="#3d72cc" stroke-width="1.5" fill="none"/>
<text x="8" y="7.5" font-family="Liberation Sans" font-size="8.5" fill="#111" textLength="8" lengthAdjust="spacingAndGlyphs">,0</text>
<text x="3" y="15" font-family="Liberation Sans" font-size="8.5" fill="#111" textLength="13" lengthAdjust="spacingAndGlyphs">,00</text></svg>
<svg class="a" style="left:429px;top:133px" width="18" height="16"><text x="3" y="7.5" font-family="Liberation Sans" font-size="8.5" fill="#111" textLength="13" lengthAdjust="spacingAndGlyphs">,00</text>
<path d="M1,12 H7 M4.5,9.5 L7,12 L4.5,14.5" stroke="#3d72cc" stroke-width="1.5" fill="none"/>
<text x="8" y="15" font-family="Liberation Sans" font-size="8.5" fill="#111" textLength="8" lengthAdjust="spacingAndGlyphs">,0</text></svg>
<div class="a" style="left:495px;top:87px;width:31px;height:31px;border:1px solid #d5dae0;border-radius:3px;background:linear-gradient(180deg,#fff,#f4f6f9)"></div>
<svg class="a" style="left:500px;top:92px" width="24" height="22"><defs><linearGradient id="bl" x1="0" y1="0" x2="1" y2="1"><stop offset="0" stop-color="#a9c6f2"/><stop offset="1" stop-color="#2f5fb8"/></linearGradient></defs>
<text x="2.5" y="18" font-family="Liberation Serif" font-size="22" fill="#2d56aa">A</text>
<ellipse cx="13" cy="16.2" rx="4.8" ry="2.3" transform="rotate(-38 13 16.2)" fill="url(#bl)" stroke="#2a4f9a" stroke-width="0.6"/>
<path d="M15.5,12.5 L17.5,10.5 L19,12 L17,14 Z" fill="#e9b730" stroke="#a57a12" stroke-width="0.5"/>
<path d="M18,10 L20,8" stroke="#c9a040" stroke-width="1" stroke-dasharray="1,1"/></svg>
<div class="t" style="left:495px;top:124px;font-size:11px;letter-spacing:0.000px;color:#2e2e2e">Стили</div>
<svg class="a" style="left:508px;top:140px" width="6" height="4"><polygon points="0,0 5,0 2.5,3" fill="#646464"/></svg>
<svg class="a" style="left:540px;top:90px" width="17" height="16"><rect x="0.5" y="0.5" width="5" height="3.5" fill="#f4f7fc" stroke="#3e5578"/><rect x="0.5" y="7.5" width="5" height="3" fill="#f4f7fc" stroke="#3e5578"/><rect x="0.5" y="10.5" width="5" height="3" fill="#f4f7fc" stroke="#3e5578"/><path d="M6.5,6 H9.5 M8,4.5 V7.5" stroke="#111"/><rect x="9.5" y="4.5" width="6" height="3" fill="#6d9de0" stroke="#2d5aa8"/></svg>
<div class="t" style="left:559px;top:92px;font-size:11px;letter-spacing:0.000px;color:#2e2e2e">Вставить</div>
<svg class="a" style="left:611px;top:95px" width="6" height="4"><polygon points="0,0 5,0 2.5,3" fill="#646464"/></svg>
<svg class="a" style="left:540px;top:112px" width="17" height="15"><rect x="0.5" y="0.5" width="5" height="3" fill="#f4f7fc" stroke="#3e5578"/><rect x="0.5" y="7.5" width="5" height="3" fill="#f4f7fc" stroke="#3e5578"/><rect x="0.5" y="10.5" width="5" height="3" fill="#f4f7fc" stroke="#3e5578"/><rect x="4.5" y="4.5" width="5.5" height="3" fill="#6d9de0" stroke="#2d5aa8"/><path d="M9.5,1.5 L15,7.5 M15,1.5 L9.5,7.5" stroke="#f02818" stroke-width="2"/></svg>
<div class="t" style="left:559px;top:114px;font-size:11px;letter-spacing:0.000px;color:#2e2e2e">Удалить</div>
<svg class="a" style="left:606px;top:117px" width="6" height="4"><polygon points="0,0 5,0 2.5,3" fill="#646464"/></svg>
<svg class="a" style="left:540px;top:133px" width="17" height="17"><path d="M0.5,1.5 H15.5" stroke="#333" stroke-dasharray="1,1.5"/><path d="M0.5,0 V3 M15.5,0 V3 M6,0 V3 M10,0 V3" stroke="#333"/>
<rect x="0.5" y="3.5" width="15" height="12" fill="#eef3fa" stroke="#3e5578"/>
<path d="M0.5,7.5 H15.5 M0.5,11.5 H15.5 M5.5,3.5 V15.5 M10.5,3.5 V15.5" stroke="#8ea2bf" stroke-width="0.9"/>
<rect x="6" y="8" width="4" height="3" fill="#5a8fe0"/></svg>
<div class="t" style="left:559px;top:136px;font-size:11px;letter-spacing:0.200px;color:#2e2e2e">Формат</div>
<svg class="a" style="left:603px;top:139px" width="6" height="4"><polygon points="0,0 5,0 2.5,3" fill="#646464"/></svg>
<div class="t" style="left:635px;top:90px;font-family:\'Liberation Serif\',serif;font-weight:bold;font-size:15px;color:#111">Σ</div>
<svg class="a" style="left:652px;top:95px" width="6" height="4"><polygon points="0,0 5,0 2.5,3" fill="#646464"/></svg>
<svg class="a" style="left:633px;top:111px" width="14" height="17"><rect x="0.5" y="0.5" width="13" height="15" fill="#e3edfb" stroke="#3d6bb3"/><rect x="1" y="1" width="12" height="2.5" fill="#8cb2e8"/>
<path d="M5,5 H9 V9 H11.5 L7,14 L2.5,9 H5 Z" fill="#3f7fe0" stroke="#2a5bb0" stroke-width="0.7"/></svg>
<svg class="a" style="left:650px;top:117px" width="6" height="4"><polygon points="0,0 5,0 2.5,3" fill="#646464"/></svg>
<svg class="a" style="left:632px;top:134px" width="16" height="14"><path d="M1.5,9.5 L9,2.5 C10.5,1 12.5,1 13.5,2.5 C14.5,3.8 14.3,5 13,6.2 L6,12.5 C4.5,13.5 2.5,13 1.5,12 C0.8,11.2 0.8,10.3 1.5,9.5 Z" fill="#f4f6fa" stroke="#5a6272" stroke-width="0.9"/>
<path d="M4,7 L9.5,12" stroke="#9aa3b0" stroke-width="0.8"/><path d="M5,12.5 H15" stroke="#222" stroke-width="1.2"/></svg>
<svg class="a" style="left:650px;top:139px" width="6" height="4"><polygon points="0,0 5,0 2.5,3" fill="#646464"/></svg>
<svg class="a" style="left:679px;top:88px" width="33" height="32"><defs><linearGradient id="fn" x1="0" y1="0" x2="1" y2="0"><stop offset="0" stop-color="#8e959e"/><stop offset=".45" stop-color="#eceef1"/><stop offset="1" stop-color="#7f868f"/></linearGradient></defs>
<path d="M11.5,7 H31.5 L21.5,16.5 V27.5 L16.5,27.5 V16.5 Z" fill="url(#fn)" stroke="#6f7781" stroke-width="0.8"/>
<text x="2" y="13.5" font-family="Liberation Serif" font-weight="bold" font-size="17" fill="#2a5cb8">A</text>
<text x="0.5" y="30.5" font-family="Liberation Serif" font-weight="bold" font-size="17" fill="#8a2f2b">Я</text></svg>
<div class="t" style="left:664px;top:126px;font-size:11px;letter-spacing:0.333px;color:#2e2e2e">Сортировка</div>
<div class="t" style="left:667px;top:139px;font-size:11px;letter-spacing:0.143px;color:#2e2e2e">и фильтр</div>
<svg class="a" style="left:718px;top:142px" width="6" height="4"><polygon points="0,0 5,0 2.5,3" fill="#646464"/></svg>
<svg class="a" style="left:746px;top:91px" width="30" height="26"><defs><linearGradient id="bn" x1="0" y1="0" x2="1" y2="0"><stop offset="0" stop-color="#4a6ea8"/><stop offset=".45" stop-color="#a9c0e2"/><stop offset="1" stop-color="#3f5f96"/></linearGradient></defs>
<rect x="7" y="1" width="4" height="4" rx="1" fill="url(#bn)" stroke="#33507f" stroke-width="0.6"/><rect x="15" y="1" width="4" height="4" rx="1" fill="url(#bn)" stroke="#33507f" stroke-width="0.6"/>
<rect x="4" y="5" width="9" height="8" rx="1.5" fill="url(#bn)" stroke="#33507f" stroke-width="0.7"/><rect x="13" y="5" width="9" height="8" rx="1.5" fill="url(#bn)" stroke="#33507f" stroke-width="0.7"/>
<rect x="1" y="12" width="11" height="12.5" rx="2" fill="url(#bn)" stroke="#33507f" stroke-width="0.8"/><rect x="15" y="12" width="11" height="12.5" rx="2" fill="url(#bn)" stroke="#33507f" stroke-width="0.8"/>
<rect x="11" y="13" width="5" height="4" fill="#3c5b8e"/><path d="M1.5,21.5 H11.5 M15.5,21.5 H25.5" stroke="#2d4570" stroke-width="0.8"/></svg>
<div class="t" style="left:739px;top:126px;font-size:11px;letter-spacing:0.667px;color:#2e2e2e">Найти и</div>
<div class="t" style="left:733px;top:139px;font-size:11px;letter-spacing:0.286px;color:#2e2e2e">выделить</div>
<svg class="a" style="left:786px;top:142px" width="6" height="4"><polygon points="0,0 5,0 2.5,3" fill="#646464"/></svg>
<div class="a" style="left:39px;top:169px;width:801px;height:30px;background:#e4e8ed;border-left:1px solid #5f6b78;border-right:1px solid #5f6b78"></div>
<div class="a" style="left:40px;top:169px;width:799px;height:1px;background:#9aa3ad"></div>
<div class="a" style="left:40px;top:173px;width:162px;height:22px;background:#fff;border-top:1px solid #b9c0c8;border-bottom:1px solid #b9c0c8"></div>
<div class="t" style="left:100px;top:179px;font-size:12px;color:#000">C12</div>
<svg class="a" style="left:187px;top:183px" width="9" height="5"><polygon points="0,0 8,0 4,4" fill="#222"/></svg>
<div class="a" style="left:201px;top:173px;width:90px;height:22px;background:linear-gradient(180deg,#e6e9ed,#dee2e7);border:1px solid #a9b0b8;border-right:0;border-radius:11px 0 0 11px"></div>
<div class="a" style="left:207px;top:180px;width:8px;height:8px;border-radius:50%;background:linear-gradient(180deg,#aeb3ba,#d9dde2 60%,#f2f4f6)"></div>
<div class="t" style="left:268px;top:177px;font-family:'Liberation Serif',serif;font-style:italic;font-weight:bold;font-size:14px;color:#2b2b2b">f<span style="font-size:11px;margin-left:-1px">x</span></div>
<div class="a" style="left:285px;top:173px;width:538px;height:22px;background:#fff;border-top:1px solid #b9c0c8;border-bottom:1px solid #b9c0c8;border-left:1px solid #b9c0c8"></div>
<div class="t" style="left:294px;top:180px;font-size:12px;color:#000">=B9+C9+D9+E9+F9</div>
<div class="a" style="left:823px;top:173px;width:16px;height:22px;background:#dfe3e8;border:1px solid #b9c0c8"></div>
<svg class="a" style="left:826px;top:181px" width="10" height="7"><polyline points="1,1 5,5 9,1" fill="none" stroke="#555" stroke-width="2"/></svg>
<div class="a" style="left:40px;top:195px;width:799px;height:3px;background:#f2f4f7"></div>
<div class="a" style="left:40px;top:198px;width:799px;height:1px;background:#8d949c"></div>
<div class="a" style="left:40px;top:199px;width:783px;height:449px;background:#fff;overflow:hidden">
<div class="a" style="left:0px;top:0px;width:783px;height:19px;background:#e3e6ea"></div>
<div class="a" style="left:0px;top:19px;width:25px;height:440px;background:#e3e6ea"></div>
<div class="a" style="left:26px;top:39px;width:757px;height:1px;background:#dadcdd"></div>
<div class="a" style="left:0px;top:39px;width:25px;height:1px;background:#a3a8ae"></div>
<div class="a" style="left:26px;top:59px;width:757px;height:1px;background:#dadcdd"></div>
<div class="a" style="left:0px;top:59px;width:25px;height:1px;background:#a3a8ae"></div>
<div class="a" style="left:26px;top:79px;width:757px;height:1px;background:#dadcdd"></div>
<div class="a" style="left:0px;top:79px;width:25px;height:1px;background:#a3a8ae"></div>
<div class="a" style="left:26px;top:99px;width:757px;height:1px;background:#dadcdd"></div>
<div class="a" style="left:0px;top:99px;width:25px;height:1px;background:#a3a8ae"></div>
<div class="a" style="left:26px;top:119px;width:757px;height:1px;background:#dadcdd"></div>
<div class="a" style="left:0px;top:119px;width:25px;height:1px;background:#a3a8ae"></div>
<div class="a" style="left:26px;top:139px;width:757px;height:1px;background:#dadcdd"></div>
<div class="a" style="left:0px;top:139px;width:25px;height:1px;background:#a3a8ae"></div>
<div class="a" style="left:26px;top:159px;width:757px;height:1px;background:#dadcdd"></div>
<div class="a" style="left:0px;top:159px;width:25px;height:1px;background:#a3a8ae"></div>
<div class="a" style="left:26px;top:179px;width:757px;height:1px;background:#dadcdd"></div>
<div class="a" style="left:0px;top:179px;width:25px;height:1px;background:#a3a8ae"></div>
<div class="a" style="left:26px;top:199px;width:757px;height:1px;background:#dadcdd"></div>
<div class="a" style="left:0px;top:199px;width:25px;height:1px;background:#a3a8ae"></div>
<div class="a" style="left:26px;top:219px;width:757px;height:1px;background:#dadcdd"></div>
<div class="a" style="left:0px;top:219px;width:25px;height:1px;background:#a3a8ae"></div>
<div class="a" style="left:26px;top:239px;width:757px;height:1px;background:#dadcdd"></div>
<div class="a" style="left:0px;top:239px;width:25px;height:1px;background:#a3a8ae"></div>
<div class="a" style="left:26px;top:259px;width:757px;height:1px;background:#dadcdd"></div>
<div class="a" style="left:0px;top:259px;width:25px;height:1px;background:#a3a8ae"></div>
<div class="a" style="left:26px;top:279px;width:757px;height:1px;background:#dadcdd"></div>
<div class="a" style="left:0px;top:279px;width:25px;height:1px;background:#a3a8ae"></div>
<div class="a" style="left:26px;top:299px;width:757px;height:1px;background:#dadcdd"></div>
<div class="a" style="left:0px;top:299px;width:25px;height:1px;background:#a3a8ae"></div>
<div class="a" style="left:26px;top:319px;width:757px;height:1px;background:#dadcdd"></div>
<div class="a" style="left:0px;top:319px;width:25px;height:1px;background:#a3a8ae"></div>
<div class="a" style="left:26px;top:339px;width:757px;height:1px;background:#dadcdd"></div>
<div class="a" style="left:0px;top:339px;width:25px;height:1px;background:#a3a8ae"></div>
<div class="a" style="left:26px;top:359px;width:757px;height:1px;background:#dadcdd"></div>
<div class="a" style="left:0px;top:359px;width:25px;height:1px;background:#a3a8ae"></div>
<div class="a" style="left:26px;top:379px;width:757px;height:1px;background:#dadcdd"></div>
<div class="a" style="left:0px;top:379px;width:25px;height:1px;background:#a3a8ae"></div>
<div class="a" style="left:26px;top:399px;width:757px;height:1px;background:#dadcdd"></div>
<div class="a" style="left:0px;top:399px;width:25px;height:1px;background:#a3a8ae"></div>
<div class="a" style="left:26px;top:419px;width:757px;height:1px;background:#dadcdd"></div>
<div class="a" style="left:0px;top:419px;width:25px;height:1px;background:#a3a8ae"></div>
<div class="a" style="left:26px;top:439px;width:757px;height:1px;background:#dadcdd"></div>
<div class="a" style="left:0px;top:439px;width:25px;height:1px;background:#a3a8ae"></div>
<div class="a" style="left:26px;top:459px;width:757px;height:1px;background:#dadcdd"></div>
<div class="a" style="left:0px;top:459px;width:25px;height:1px;background:#a3a8ae"></div>
<div class="a" style="left:96px;top:19px;width:1px;height:440px;background:#dadcdd"></div>
<div class="a" style="left:96px;top:0px;width:1px;height:19px;background:#a3a8ae"></div>
<div class="a" style="left:167px;top:19px;width:1px;height:440px;background:#dadcdd"></div>
<div class="a" style="left:167px;top:0px;width:1px;height:19px;background:#a3a8ae"></div>
<div class="a" style="left:244px;top:19px;width:1px;height:440px;background:#dadcdd"></div>
<div class="a" style="left:244px;top:0px;width:1px;height:19px;background:#a3a8ae"></div>
<div class="a" style="left:316px;top:19px;width:1px;height:440px;background:#dadcdd"></div>
<div class="a" style="left:316px;top:0px;width:1px;height:19px;background:#a3a8ae"></div>
<div class="a" style="left:389px;top:19px;width:1px;height:440px;background:#dadcdd"></div>
<div class="a" style="left:389px;top:0px;width:1px;height:19px;background:#a3a8ae"></div>
<div class="a" style="left:457px;top:19px;width:1px;height:440px;background:#dadcdd"></div>
<div class="a" style="left:457px;top:0px;width:1px;height:19px;background:#a3a8ae"></div>
<div class="a" style="left:521px;top:19px;width:1px;height:440px;background:#dadcdd"></div>
<div class="a" style="left:521px;top:0px;width:1px;height:19px;background:#a3a8ae"></div>
<div class="a" style="left:585px;top:19px;width:1px;height:440px;background:#dadcdd"></div>
<div class="a" style="left:585px;top:0px;width:1px;height:19px;background:#a3a8ae"></div>
<div class="a" style="left:649px;top:19px;width:1px;height:440px;background:#dadcdd"></div>
<div class="a" style="left:649px;top:0px;width:1px;height:19px;background:#a3a8ae"></div>
<div class="a" style="left:713px;top:19px;width:1px;height:440px;background:#dadcdd"></div>
<div class="a" style="left:713px;top:0px;width:1px;height:19px;background:#a3a8ae"></div>
<div class="a" style="left:777px;top:19px;width:1px;height:440px;background:#dadcdd"></div>
<div class="a" style="left:777px;top:0px;width:1px;height:19px;background:#a3a8ae"></div>
<div class="a" style="left:841px;top:19px;width:1px;height:440px;background:#dadcdd"></div>
<div class="a" style="left:841px;top:0px;width:1px;height:19px;background:#a3a8ae"></div>
<div class="a" style="left:0px;top:19px;width:783px;height:1px;background:#c8ccd3"></div>
<div class="a" style="left:25px;top:0px;width:1px;height:459px;background:#a3a8ae"></div>
<svg class="a" style="left:10px;top:4px" width="12" height="13"><polygon points="11,1 11,12 0.5,12" fill="#c3c7cd"/></svg>
<div class="a" style="left:167px;top:0px;width:78px;height:20px;background:linear-gradient(180deg,#f9cc5e,#ffe387);border:1px solid #d9a13b;border-top:0"></div>
<div class="a" style="left:0px;top:239px;width:26px;height:21px;background:linear-gradient(180deg,#ffd65c,#ffdb68);border:1px solid #d9a13b;border-left:0"></div>
<div class="t" style="left:26px;top:5px;font-size:12px;color:#2a3340;width:70px;text-align:center">A</div>
<div class="t" style="left:97px;top:5px;font-size:12px;color:#2a3340;width:70px;text-align:center">B</div>
<div class="t" style="left:168px;top:5px;font-size:12px;color:#2a3340;width:76px;text-align:center">C</div>
<div class="t" style="left:245px;top:5px;font-size:12px;color:#2a3340;width:71px;text-align:center">D</div>
<div class="t" style="left:317px;top:5px;font-size:12px;color:#2a3340;width:72px;text-align:center">E</div>
<div class="t" style="left:390px;top:5px;font-size:12px;color:#2a3340;width:67px;text-align:center">F</div>
<div class="t" style="left:458px;top:5px;font-size:12px;color:#2a3340;width:63px;text-align:center">G</div>
<div class="t" style="left:522px;top:5px;font-size:12px;color:#2a3340;width:63px;text-align:center">H</div>
<div class="t" style="left:586px;top:5px;font-size:12px;color:#2a3340;width:63px;text-align:center">I</div>
<div class="t" style="left:650px;top:5px;font-size:12px;color:#2a3340;width:63px;text-align:center">J</div>
<div class="t" style="left:714px;top:5px;font-size:12px;color:#2a3340;width:63px;text-align:center">K</div>
<div class="t" style="left:778px;top:5px;font-size:12px;color:#2a3340;width:63px;text-align:center">L</div>
<div class="t" style="left:0px;top:25px;font-size:12px;color:#2a3340;width:26px;text-align:center">1</div>
<div class="t" style="left:0px;top:45px;font-size:12px;color:#2a3340;width:26px;text-align:center">2</div>
<div class="t" style="left:0px;top:65px;font-size:12px;color:#2a3340;width:26px;text-align:center">3</div>
<div class="t" style="left:0px;top:85px;font-size:12px;color:#2a3340;width:26px;text-align:center">4</div>
<div class="t" style="left:0px;top:105px;font-size:12px;color:#2a3340;width:26px;text-align:center">5</div>
<div class="t" style="left:0px;top:125px;font-size:12px;color:#2a3340;width:26px;text-align:center">6</div>
<div class="t" style="left:0px;top:145px;font-size:12px;color:#2a3340;width:26px;text-align:center">7</div>
<div class="t" style="left:0px;top:165px;font-size:12px;color:#2a3340;width:26px;text-align:center">8</div>
<div class="t" style="left:0px;top:185px;font-size:12px;color:#2a3340;width:26px;text-align:center">9</div>
<div class="t" style="left:0px;top:205px;font-size:12px;color:#2a3340;width:26px;text-align:center">10</div>
<div class="t" style="left:0px;top:225px;font-size:12px;color:#2a3340;width:26px;text-align:center">11</div>
<div class="t" style="left:0px;top:245px;font-size:12px;color:#2a3340;width:26px;text-align:center">12</div>
<div class="t" style="left:0px;top:265px;font-size:12px;color:#2a3340;width:26px;text-align:center">13</div>
<div class="t" style="left:0px;top:285px;font-size:12px;color:#2a3340;width:26px;text-align:center">14</div>
<div class="t" style="left:0px;top:305px;font-size:12px;color:#2a3340;width:26px;text-align:center">15</div>
<div class="t" style="left:0px;top:325px;font-size:12px;color:#2a3340;width:26px;text-align:center">16</div>
<div class="t" style="left:0px;top:345px;font-size:12px;color:#2a3340;width:26px;text-align:center">17</div>
<div class="t" style="left:0px;top:365px;font-size:12px;color:#2a3340;width:26px;text-align:center">18</div>
<div class="t" style="left:0px;top:385px;font-size:12px;color:#2a3340;width:26px;text-align:center">19</div>
<div class="t" style="left:0px;top:405px;font-size:12px;color:#2a3340;width:26px;text-align:center">20</div>
<div class="t" style="left:0px;top:425px;font-size:12px;color:#2a3340;width:26px;text-align:center">21</div>
<div class="t" style="left:0px;top:445px;font-size:12px;color:#2a3340;width:26px;text-align:center">22</div>
<div class="a" style="left:26px;top:20px;width:70px;height:159px;background:#ffff00"></div>
<div class="a" style="left:97px;top:20px;width:70px;height:19px;background:#00b050"></div>
<div class="a" style="left:168px;top:20px;width:76px;height:19px;background:#00b050"></div>
<div class="a" style="left:245px;top:20px;width:71px;height:19px;background:#00b050"></div>
<div class="a" style="left:317px;top:20px;width:72px;height:19px;background:#00b050"></div>
<div class="a" style="left:390px;top:20px;width:67px;height:19px;background:#00b050"></div>
<div class="a" style="left:25px;top:39px;width:432px;height:1px;background:#000"></div>
<div class="a" style="left:25px;top:59px;width:432px;height:1px;background:#000"></div>
<div class="a" style="left:25px;top:79px;width:432px;height:1px;background:#000"></div>
<div class="a" style="left:25px;top:99px;width:432px;height:1px;background:#000"></div>
<div class="a" style="left:25px;top:119px;width:432px;height:1px;background:#000"></div>
<div class="a" style="left:25px;top:139px;width:432px;height:1px;background:#000"></div>
<div class="a" style="left:25px;top:159px;width:432px;height:1px;background:#000"></div>
<div class="a" style="left:25px;top:179px;width:432px;height:1px;background:#000"></div>
<div class="a" style="left:96px;top:19px;width:1px;height:160px;background:#000"></div>
<div class="a" style="left:167px;top:19px;width:1px;height:160px;background:#000"></div>
<div class="a" style="left:244px;top:19px;width:1px;height:160px;background:#000"></div>
<div class="a" style="left:316px;top:19px;width:1px;height:160px;background:#000"></div>
<div class="a" style="left:389px;top:19px;width:1px;height:160px;background:#000"></div>
<div class="a" style="left:457px;top:19px;width:1px;height:160px;background:#000"></div>
<div class="t" style="left:28px;top:24px;font-size:13px;letter-spacing:0.333px;color:#000;-webkit-text-stroke:0.2px #000">Дата</div>
<div class="t" style="left:98px;top:24px;font-size:13px;letter-spacing:0.375px;color:#000;-webkit-text-stroke:0.2px #000">Магазин 1</div>
<div class="t" style="left:169px;top:24px;font-size:13px;letter-spacing:0.375px;color:#000;-webkit-text-stroke:0.2px #000">Магазин 2</div>
<div class="t" style="left:247px;top:24px;font-size:13px;letter-spacing:0.375px;color:#000;-webkit-text-stroke:0.2px #000">Магазин 3</div>
<div class="t" style="left:319px;top:24px;font-size:13px;letter-spacing:0.375px;color:#000;-webkit-text-stroke:0.2px #000">Магазин 4</div>
<div class="t" style="left:391px;top:24px;font-size:13px;letter-spacing:0.375px;color:#000;-webkit-text-stroke:0.2px #000">Магазин 5</div>
<div class="t" style="left:30px;top:45px;font-size:12.8px;letter-spacing:0.000px;color:#000;-webkit-text-stroke:0.2px #000">07.03.2017</div>
<div class="t" style="left:112px;top:45px;font-size:12.7px;color:#000;-webkit-text-stroke:0.2px #000">15256,66</div>
<div class="t" style="left:189px;top:45px;font-size:12.7px;color:#000;-webkit-text-stroke:0.2px #000">14851,25</div>
<div class="t" style="left:261px;top:45px;font-size:12.7px;color:#000;-webkit-text-stroke:0.2px #000">25879,69</div>
<div class="t" style="left:334px;top:45px;font-size:12.7px;color:#000;-webkit-text-stroke:0.2px #000">10552,69</div>
<div class="t" style="left:402px;top:45px;font-size:12.7px;color:#000;-webkit-text-stroke:0.2px #000">32478,96</div>
<div class="t" style="left:30px;top:65px;font-size:12.8px;letter-spacing:0.000px;color:#000;-webkit-text-stroke:0.2px #000">08.03.2017</div>
<div class="t" style="left:112px;top:65px;font-size:12.7px;color:#000;-webkit-text-stroke:0.2px #000">17458,96</div>
<div class="t" style="left:189px;top:65px;font-size:12.7px;color:#000;-webkit-text-stroke:0.2px #000">16582,65</div>
<div class="t" style="left:261px;top:65px;font-size:12.7px;color:#000;-webkit-text-stroke:0.2px #000">23647,87</div>
<div class="t" style="left:335px;top:65px;font-size:12.7px;color:#000;-webkit-text-stroke:0.2px #000">11478,45</div>
<div class="t" style="left:402px;top:65px;font-size:12.7px;color:#000;-webkit-text-stroke:0.2px #000">33478,96</div>
<div class="t" style="left:30px;top:85px;font-size:12.8px;letter-spacing:0.000px;color:#000;-webkit-text-stroke:0.2px #000">09.03.2017</div>
<div class="t" style="left:112px;top:85px;font-size:12.7px;color:#000;-webkit-text-stroke:0.2px #000">14569,85</div>
<div class="t" style="left:189px;top:85px;font-size:12.7px;color:#000;-webkit-text-stroke:0.2px #000">17589,78</div>
<div class="t" style="left:261px;top:85px;font-size:12.7px;color:#000;-webkit-text-stroke:0.2px #000">24789,32</div>
<div class="t" style="left:335px;top:85px;font-size:12.7px;color:#000;-webkit-text-stroke:0.2px #000">11548,96</div>
<div class="t" style="left:402px;top:85px;font-size:12.7px;color:#000;-webkit-text-stroke:0.2px #000">35698,89</div>
<div class="t" style="left:29px;top:105px;font-size:12.8px;letter-spacing:0.111px;color:#000;-webkit-text-stroke:0.2px #000">10.03.2017</div>
<div class="t" style="left:112px;top:105px;font-size:12.7px;color:#000;-webkit-text-stroke:0.2px #000">13589,25</div>
<div class="t" style="left:189px;top:105px;font-size:12.7px;color:#000;-webkit-text-stroke:0.2px #000">15478,96</div>
<div class="t" style="left:261px;top:105px;font-size:12.7px;color:#000;-webkit-text-stroke:0.2px #000">22478,96</div>
<div class="t" style="left:335px;top:105px;font-size:12.7px;color:#000;-webkit-text-stroke:0.2px #000">12211,65</div>
<div class="t" style="left:402px;top:105px;font-size:12.7px;color:#000;-webkit-text-stroke:0.2px #000">33478,96</div>
<div class="t" style="left:29px;top:125px;font-size:12.8px;letter-spacing:0.222px;color:#000;-webkit-text-stroke:0.2px #000">11.03.2017</div>
<div class="t" style="left:112px;top:125px;font-size:12.7px;color:#000;-webkit-text-stroke:0.2px #000">14785,65</div>
<div class="t" style="left:189px;top:125px;font-size:12.7px;color:#000;-webkit-text-stroke:0.2px #000">14246,85</div>
<div class="t" style="left:261px;top:125px;font-size:12.7px;color:#000;-webkit-text-stroke:0.2px #000">24782,34</div>
<div class="t" style="left:335px;top:125px;font-size:12.7px;color:#000;-webkit-text-stroke:0.2px #000">11456,98</div>
<div class="t" style="left:402px;top:125px;font-size:12.7px;color:#000;-webkit-text-stroke:0.2px #000">36529,89</div>
<div class="t" style="left:29px;top:145px;font-size:12.8px;letter-spacing:0.111px;color:#000;-webkit-text-stroke:0.2px #000">12.03.2017</div>
<div class="t" style="left:112px;top:145px;font-size:12.7px;color:#000;-webkit-text-stroke:0.2px #000">16589,63</div>
<div class="t" style="left:191px;top:145px;font-size:12.7px;color:#000;-webkit-text-stroke:0.2px #000">18111,54</div>
<div class="t" style="left:261px;top:145px;font-size:12.7px;color:#000;-webkit-text-stroke:0.2px #000">26891,43</div>
<div class="t" style="left:335px;top:145px;font-size:12.7px;color:#000;-webkit-text-stroke:0.2px #000">11356,96</div>
<div class="t" style="left:402px;top:145px;font-size:12.7px;color:#000;-webkit-text-stroke:0.2px #000">35713,63</div>
<div class="t" style="left:29px;top:165px;font-size:12.8px;letter-spacing:0.111px;color:#000;-webkit-text-stroke:0.2px #000">13.03.2017</div>
<div class="t" style="left:112px;top:165px;font-size:12.7px;color:#000;-webkit-text-stroke:0.2px #000">16546,25</div>
<div class="t" style="left:189px;top:165px;font-size:12.7px;color:#000;-webkit-text-stroke:0.2px #000">17489,63</div>
<div class="t" style="left:261px;top:165px;font-size:12.7px;color:#000;-webkit-text-stroke:0.2px #000">25597,47</div>
<div class="t" style="left:334px;top:165px;font-size:12.7px;color:#000;-webkit-text-stroke:0.2px #000">12569,87</div>
<div class="t" style="left:402px;top:165px;font-size:12.7px;color:#000;-webkit-text-stroke:0.2px #000">34178,56</div>
<div class="t" style="left:105px;top:185px;font-size:12.7px;color:#000;-webkit-text-stroke:0.2px #000">108796,25</div>
<div class="t" style="left:183px;top:185px;font-size:12.7px;color:#000;-webkit-text-stroke:0.2px #000">114350,66</div>
<div class="t" style="left:254px;top:185px;font-size:12.7px;color:#000;-webkit-text-stroke:0.2px #000">174067,08</div>
<div class="t" style="left:335px;top:185px;font-size:12.7px;color:#000;-webkit-text-stroke:0.2px #000">81175,56</div>
<div class="t" style="left:395px;top:185px;font-size:12.7px;color:#000;-webkit-text-stroke:0.2px #000">241557,85</div>
<div class="t" style="left:28px;top:244px;font-size:13px;font-weight:bold;letter-spacing:0.111px;color:#000;-webkit-text-stroke:0.2px #000">Общий итог</div>
<div class="t" style="left:189px;top:245px;font-size:12.7px;color:#000;-webkit-text-stroke:0.2px #000">719947,4</div>
<div class="a" style="left:166px;top:238px;width:80px;height:3px;background:#000"></div>
<div class="a" style="left:166px;top:238px;width:3px;height:23px;background:#000"></div>
<div class="a" style="left:166px;top:258px;width:75px;height:3px;background:#000"></div>
<div class="a" style="left:243px;top:238px;width:3px;height:18px;background:#000"></div>
<div class="a" style="left:240px;top:256px;width:8px;height:7px;background:#fff"></div>
<div class="a" style="left:241px;top:257px;width:6px;height:5px;background:#000"></div>
</div>
<div class="a" style="left:823px;top:199px;width:16px;height:449px;background:linear-gradient(90deg,#dde1e7,#e3e6eb)"></div>
<div class="a" style="left:824px;top:199px;width:15px;height:8px;background:#fff;border:1px solid #8d949c;box-shadow:inset 0 0 0 1px #e8ecf4"></div>
<div class="a" style="left:828px;top:202px;width:8px;height:1px;background:#6b7178"></div>
<svg class="a" style="left:825px;top:212px" width="12" height="7"><polygon points="1,6 5.5,1 10,6" fill="#3d3d3d"/></svg>
<div class="a" style="left:823px;top:224px;width:15px;height:388px;background:linear-gradient(90deg,#f5f6f8,#e3e6ea);border:1px solid #868c93;border-radius:2px"></div>
<div class="a" style="left:828px;top:414px;width:7px;height:7px;background:repeating-linear-gradient(180deg,#6b7178 0,#6b7178 1px,transparent 1px,transparent 2px)"></div>
<svg class="a" style="left:825px;top:636px" width="12" height="7"><polygon points="1,1 10,1 5.5,6" fill="#3d3d3d"/></svg>
<div class="a" style="left:839px;top:169px;width:1px;height:496px;background:#5f6b78"></div>
<div class="a" style="left:39px;top:169px;width:1px;height:496px;background:#5f6b78"></div>
<div class="a" style="left:40px;top:648px;width:799px;height:16px;background:linear-gradient(180deg,#e3e6ea,#dde1e6)"></div>
<div class="a" style="left:40px;top:648px;width:63px;height:16px;background:linear-gradient(180deg,#e8ebef,#dde1e6);border-top:1px solid #9aa1a9;border-right:1px solid #9aa1a9"></div>
<svg class="a" style="left:44px;top:651px" width="56" height="10">
<rect x="2" y="1" width="1.3" height="7.5" fill="#3f4650"/><polygon points="8.2,1 8.2,8.5 3.6,4.75" fill="#3f4650"/>
<polygon points="22.2,1 22.2,8.5 17.8,4.75" fill="#3f4650"/>
<polygon points="31.8,1 31.8,8.5 36.2,4.75" fill="#3f4650"/>
<polygon points="45.8,1 45.8,8.5 50.4,4.75" fill="#3f4650"/><rect x="50.9" y="1" width="1.3" height="7.5" fill="#3f4650"/>
</svg>
<svg class="a" style="left:102px;top:647px" width="210" height="18">
<polygon points="0,0 64,0 50,16 0,16" fill="#ffffff"/>
<polygon points="64,1.5 116,1.5 103,16 50,16" fill="url(#tg)"/>
<polygon points="116,1.5 169,1.5 156,16 103,16" fill="url(#tg)"/>
<polygon points="169,1.5 202,1.5 189,16 156,16" fill="url(#tg)"/>
<defs><linearGradient id="tg" x1="0" y1="0" x2="0" y2="1"><stop offset="0" stop-color="#eceef2"/><stop offset="1" stop-color="#dde1e6"/></linearGradient></defs>
<path d="M50,16 L64,1.5 H202 L189,16" fill="none" stroke="#9aa1a9" stroke-width="1"/>
<path d="M103,16 L116.5,1.5 M156,16 L169.5,1.5" fill="none" stroke="#9aa1a9" stroke-width="1"/>
<path d="M51,16 L54,13 L55,16 Z M104,16 L107,13 L108,16 Z M157,16 L160,13 L161,16 Z" fill="#c5cad0"/>
</svg>
<div class="a" style="left:102px;top:648px;width:1px;height:16px;background:#9aa1a9"></div>
<div class="t" style="left:112px;top:651px;font-size:12px;font-weight:bold;letter-spacing:0.250px;color:#2b2b2b">Лист1</div>
<div class="t" style="left:166px;top:651px;font-size:12px;letter-spacing:0.500px;color:#333a44">Лист2</div>
<div class="t" style="left:218px;top:651px;font-size:12px;letter-spacing:0.500px;color:#333a44">Лист3</div>
<svg class="a" style="left:272px;top:649px" width="16" height="14">
<path d="M3.5,4.5 H13.5 C14.5,4.5 15,5 15,6 V11.5 H10 L8,13 L6,11.5 H3.5 Z" fill="url(#ig)" stroke="#5a6f95"/>
<defs><linearGradient id="ig" x1="0" y1="0" x2="1" y2="1"><stop offset="0" stop-color="#fff"/><stop offset="1" stop-color="#b9c9e2"/></linearGradient></defs>
<path d="M4,0.5 V7.5 M0.5,4 H7.5 M1.5,1.5 L6.5,6.5 M6.5,1.5 L1.5,6.5" stroke="#e8900c" stroke-width="1.1"/>
<circle cx="4" cy="4" r="1.5" fill="#fff6c0"/></svg>
<div class="a" style="left:304px;top:648px;width:205px;height:1px;background:#a3a9b0"></div>
<div class="a" style="left:40px;top:663px;width:799px;height:1px;background:#a3a8ae"></div>
<div class="a" style="left:509px;top:648px;width:314px;height:16px;background:#e2e5e9"></div>
<div class="a" style="left:510px;top:649px;width:8px;height:15px;background:#fff;border:1px solid #8d949c"></div>
<div class="a" style="left:513px;top:652px;width:1px;height:9px;background:#777"></div>
<svg class="a" style="left:522px;top:651px" width="7" height="11"><polygon points="6,0.5 6,10.5 0.5,5.5" fill="#333"/></svg>
<div class="a" style="left:535px;top:649px;width:239px;height:14px;background:linear-gradient(180deg,#f6f7f9,#e0e3e8);border:1px solid #8f959c;border-radius:2px"></div>
<div class="a" style="left:651px;top:652px;width:6px;height:7px;background:repeating-linear-gradient(90deg,#6b7178 0,#6b7178 1px,transparent 1px,transparent 2px)"></div>
<svg class="a" style="left:804px;top:652px" width="7" height="11"><polygon points="0.5,0.5 0.5,10 5.5,5.25" fill="#333"/></svg>
<div class="a" style="left:815px;top:648px;width:8px;height:16px;background:#fff;border:1px solid #8d949c"></div>
<div class="a" style="left:818px;top:652px;width:1px;height:8px;background:#777"></div>
<div class="a" style="left:823px;top:648px;width:16px;height:16px;background:#e1e4e8"></div>
<div class="a" style="left:39px;top:664px;width:801px;height:23px;background:linear-gradient(180deg,#eef0f3 0%,#e0e3e7 50%,#cdd1d7 100%);border:1px solid #5f6b78;border-top:1px solid #8d949c"></div>
<div class="a" style="left:40px;top:665px;width:799px;height:1px;background:#fafbfc"></div>
<div class="t" style="left:48px;top:670px;font-size:11.5px;letter-spacing:0.400px;color:#333a44">Готово</div>
<div class="a" style="left:102px;top:666px;width:1px;height:20px;background:linear-gradient(180deg,rgba(120,126,134,.3),#787e86 40%,#787e86 60%,rgba(120,126,134,.3));box-shadow:1px 0 0 rgba(255,255,255,.8)"></div>
<div class="a" style="left:137px;top:666px;width:1px;height:20px;background:linear-gradient(180deg,rgba(120,126,134,.3),#787e86 40%,#787e86 60%,rgba(120,126,134,.3));box-shadow:1px 0 0 rgba(255,255,255,.8)"></div>
<svg class="a" style="left:112px;top:667px" width="16" height="15">
<rect x="0.5" y="0.5" width="14" height="13" fill="#fdfdff" stroke="#3a64a8"/><rect x="1" y="1" width="13" height="2.5" fill="#4f86dc"/>
<path d="M3,7 H5 M6.5,7 H9 M10.5,7 H13 M3,9.2 H5 M6.5,9.2 H9 M10.5,9.2 H13 M3,11.4 H5 M6.5,11.4 H9 M10.5,11.4 H13" stroke="#8aa0cc" stroke-width="1"/>
<circle cx="3.8" cy="3.8" r="3.3" fill="#e0502a"/><circle cx="3" cy="2.8" r="1.2" fill="#ff9f80"/></svg>
<div class="a" style="left:582px;top:666px;width:1px;height:20px;background:#a9afb6;box-shadow:1px 0 0 #fff"></div>
<div class="a" style="left:588px;top:667px;width:18px;height:18px;border:1px solid #d7a53d;border-radius:2px;background:linear-gradient(180deg,#fff0b8,#ffd96b)"></div>
<svg class="a" style="left:590px;top:670px" width="14" height="11">
<rect x="0.5" y="0.5" width="12.5" height="9.5" fill="#fff" stroke="#333"/>
<rect x="1" y="1" width="12" height="2" fill="#333"/>
<path d="M1,5.2 H13 M1,7.7 H13 M4.8,1 V10 M8.8,1 V10" stroke="#333" stroke-width="1"/></svg>
<svg class="a" style="left:608px;top:669px" width="14" height="13">
<rect x="0.5" y="0.5" width="13" height="12" fill="#d5d9df" stroke="#555"/>
<rect x="3.5" y="2.5" width="7" height="8" fill="#fff" stroke="#555"/>
<path d="M5,5 H9 M5,7 H9" stroke="#777"/></svg>
<svg class="a" style="left:627px;top:669px" width="14" height="13">
<rect x="0.5" y="0.5" width="13" height="12" fill="#b9bec5" stroke="#555"/>
<rect x="1" y="1" width="4" height="8" fill="#fff"/><rect x="6" y="1" width="4" height="8" fill="#fff"/>
<path d="M5.5,1 V9 M1,9.5 H13" stroke="#555"/></svg>
<div class="t" style="left:652px;top:670px;font-size:11px;letter-spacing:0.000px;color:#333a44">100%</div>
<div class="a" style="left:704px;top:675px;width:101px;height:1px;background:#8d949c;box-shadow:0 1px 0 #fff"></div>
<svg class="a" style="left:687px;top:666px" width="18" height="18">
<circle cx="8.5" cy="8.5" r="7.6" fill="url(#zg)" stroke="#6f7782" stroke-width="1"/>
<defs><radialGradient id="zg" cx="0.45" cy="0.4" r="0.7"><stop offset="0" stop-color="#ffffff"/><stop offset="1" stop-color="#dfe2e6"/></radialGradient></defs>
<rect x="4" y="7.5" width="9" height="2.2" fill="#444"/></svg>
<svg class="a" style="left:803px;top:666px" width="18" height="18">
<circle cx="8.5" cy="8.5" r="7.6" fill="url(#zg)" stroke="#6f7782" stroke-width="1"/>
<rect x="4" y="7.5" width="9" height="2.2" fill="#444"/><rect x="7.4" y="4" width="2.2" height="9" fill="#444"/></svg>
<svg class="a" style="left:749px;top:667px" width="11" height="15">
<path d="M1,1.5 H10 V9.5 L5.5,13.5 L1,9.5 Z" fill="url(#sg)" stroke="#6f7782"/>
<defs><linearGradient id="sg" x1="0" y1="0" x2="1" y2="0"><stop offset="0" stop-color="#fff"/><stop offset="1" stop-color="#d9dde2"/></linearGradient></defs></svg>
<svg class="a" style="left:828px;top:675px" width="11" height="11">
<rect x="8" y="0" width="2" height="2" fill="#9aa1a9"/><rect x="5" y="3" width="2" height="2" fill="#9aa1a9"/><rect x="8" y="3" width="2" height="2" fill="#9aa1a9"/>
<rect x="2" y="6" width="2" height="2" fill="#9aa1a9"/><rect x="5" y="6" width="2" height="2" fill="#9aa1a9"/><rect x="8" y="6" width="2" height="2" fill="#9aa1a9"/></svg>
<div class="a" style="left:285px;top:169px;width:143px;height:37px;border:5px solid #ff0000;border-radius:14px;box-shadow:2px 3px 5px rgba(0,0,0,0.5), inset 2px 3px 5px rgba(0,0,0,0.5)"></div>
<div class="a" style="left:196px;top:428px;width:103px;height:44px;border:5.3px solid #ff0000;border-radius:13px;box-shadow:2px 3px 5px rgba(0,0,0,0.5), inset 2px 3px 5px rgba(0,0,0,0.5)"></div>
</body></html>
